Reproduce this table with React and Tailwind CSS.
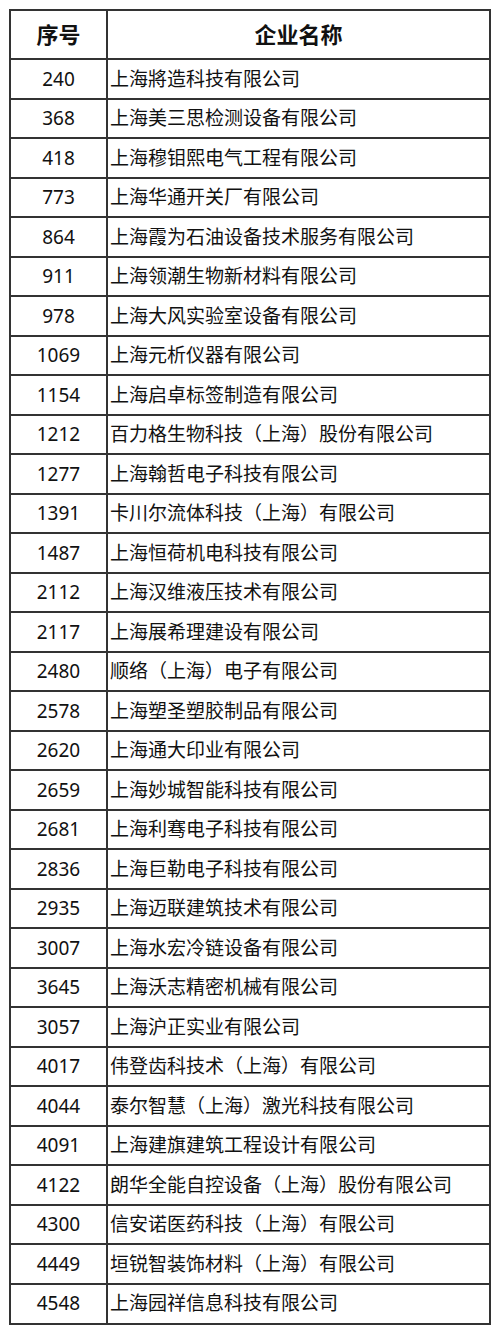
import React from "react";

const companies = [
    ["240", "上海將造科技有限公司"],
    ["368", "上海美三思检测设备有限公司"],
    ["418", "上海穆钼熙电气工程有限公司"],
    ["773", "上海华通开关厂有限公司"],
    ["864", "上海霞为石油设备技术服务有限公司"],
    ["911", "上海领潮生物新材料有限公司"],
    ["978", "上海大风实验室设备有限公司"],
    ["1069", "上海元析仪器有限公司"],
    ["1154", "上海启卓标签制造有限公司"],
    ["1212", "百力格生物科技（上海）股份有限公司"],
    ["1277", "上海翰哲电子科技有限公司"],
    ["1391", "卡川尔流体科技（上海）有限公司"],
    ["1487", "上海恒荷机电科技有限公司"],
    ["2112", "上海汉维液压技术有限公司"],
    ["2117", "上海展希理建设有限公司"],
    ["2480", "顺络（上海）电子有限公司"],
    ["2578", "上海塑圣塑胶制品有限公司"],
    ["2620", "上海通大印业有限公司"],
    ["2659", "上海妙城智能科技有限公司"],
    ["2681", "上海利骞电子科技有限公司"],
    ["2836", "上海巨勒电子科技有限公司"],
    ["2935", "上海迈联建筑技术有限公司"],
    ["3007", "上海水宏冷链设备有限公司"],
    ["3645", "上海沃志精密机械有限公司"],
    ["3057", "上海沪正实业有限公司"],
    ["4017", "伟登齿科技术（上海）有限公司"],
    ["4044", "泰尔智慧（上海）激光科技有限公司"],
    ["4091", "上海建旗建筑工程设计有限公司"],
    ["4122", "朗华全能自控设备（上海）股份有限公司"],
    ["4300", "信安诺医药科技（上海）有限公司"],
    ["4449", "垣锐智装饰材料（上海）有限公司"],
    ["4548", "上海园祥信息科技有限公司"],
];

export default function App() {
    return <div className="min-h-[1335px] bg-white pt-[9px] pl-[9px] text-[#111] font-['Noto_Sans','Noto_Sans_CJK_SC',sans-serif]">
        <div className="w-[482px] border-2 border-[#333] border-b-0">
            {/* header */}
            <div className="flex h-[49px] border-b-2 border-[#333] text-[22px] font-bold">
                <div className="w-[97px] flex items-center justify-center border-r-2 border-[#333]">序号</div>
                <div className="flex-1 flex items-center justify-center">企业名称</div>
            </div>
            {companies.map(([num, name]) => <div key={num + name}
                                                  className="flex h-[39.53px] border-b-2 border-[#333] text-[19px]">
                <div className="w-[97px] flex items-center justify-center border-r-2 border-[#333]">{num}</div>
                <div className="flex-1 flex items-center pl-[2px] whitespace-nowrap">{name}</div>
            </div>)}
        </div>
    </div>
}
